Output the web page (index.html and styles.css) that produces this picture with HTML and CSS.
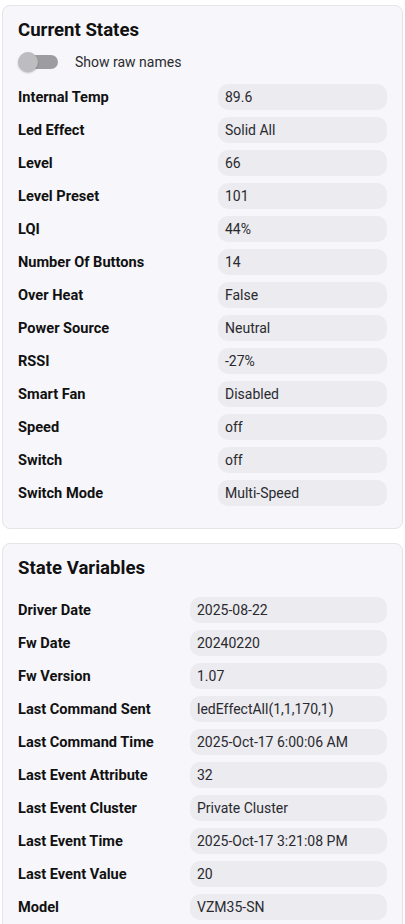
FILE: index.html
```html
<!DOCTYPE html>
<html lang="en">
<head>
    <meta charset="UTF-8">
    <meta name="viewport" content="width=device-width, initial-scale=1.0">
    <title>Device States</title>
    <link rel="stylesheet" href="styles.css">
</head>
<body>

<!-- Current states card -->
<div class="card">
    <h2>Current States</h2>
    <label class="toggle-row">
        <span class="switch"><span class="knob"></span></span>
        <span>Show raw names</span>
    </label>
    <div class="state-list current">
        <div class="name">Internal Temp</div><div class="value">89.6</div>
        <div class="name">Led Effect</div><div class="value">Solid All</div>
        <div class="name">Level</div><div class="value">66</div>
        <div class="name">Level Preset</div><div class="value">101</div>
        <div class="name">LQI</div><div class="value">44%</div>
        <div class="name">Number Of Buttons</div><div class="value">14</div>
        <div class="name">Over Heat</div><div class="value">False</div>
        <div class="name">Power Source</div><div class="value">Neutral</div>
        <div class="name">RSSI</div><div class="value">-27%</div>
        <div class="name">Smart Fan</div><div class="value">Disabled</div>
        <div class="name">Speed</div><div class="value">off</div>
        <div class="name">Switch</div><div class="value">off</div>
        <div class="name">Switch Mode</div><div class="value">Multi-Speed</div>
    </div>
</div>

<!-- State variables card -->
<div class="card">
    <h2 class="spaced">State Variables</h2>
    <div class="state-list variables">
        <div class="name">Driver Date</div><div class="value">2025-08-22</div>
        <div class="name">Fw Date</div><div class="value">20240220</div>
        <div class="name">Fw Version</div><div class="value">1.07</div>
        <div class="name">Last Command Sent</div><div class="value">ledEffectAll(1,1,170,1)</div>
        <div class="name">Last Command Time</div><div class="value">2025-Oct-17 6:00:06 AM</div>
        <div class="name">Last Event Attribute</div><div class="value">32</div>
        <div class="name">Last Event Cluster</div><div class="value">Private Cluster</div>
        <div class="name">Last Event Time</div><div class="value">2025-Oct-17 3:21:08 PM</div>
        <div class="name">Last Event Value</div><div class="value">20</div>
        <div class="name">Model</div><div class="value">VZM35-SN</div>
    </div>
</div>

</body>
</html>
```

FILE: styles.css
```css
/* Page */
body {
    font-family: Roboto, "Liberation Sans", Arial, sans-serif;
    margin: 0;
    padding: 5px 2px;
    background-color: #ffffff;
    color: #1b1b1f;
}

/* Cards */
.card {
    background-color: #f7f7fb;
    border: 1px solid #e4e4e9;
    border-radius: 8px;
    padding: 12px 15px 22px 15px;
    margin-bottom: 14px;
}

.card h2 {
    font-size: 18.6px;
    line-height: 24px;
    font-weight: 700;
    margin: 0;
    color: #111;
}

.card h2.spaced {
    margin-bottom: 17px;
}

/* Toggle */
.toggle-row {
    display: flex;
    align-items: center;
    height: 28px;
    margin-top: 6px;
    margin-bottom: 8px;
    font-size: 14px;
    color: #2a2a2e;
}

.switch {
    position: relative;
    width: 40px;
    height: 14px;
    margin-right: 17px;
    display: flex;
    align-items: center;
}

.switch::before {
    content: "";
    position: absolute;
    left: 5px;
    right: 0;
    height: 14px;
    border-radius: 7px;
    background-color: #9d9da1;
}

.knob {
    position: absolute;
    left: 0;
    top: -3px;
    width: 20px;
    height: 20px;
    border-radius: 50%;
    background-color: #bdbdc0;
    box-shadow: 0 1px 2px rgba(0, 0, 0, 0.25);
}

/* State rows */
.state-list {
    display: grid;
    row-gap: 7px;
    align-items: center;
}

.state-list.current {
    grid-template-columns: 200px 169px;
}

.state-list.variables {
    grid-template-columns: 172px 197px;
}

.state-list .name {
    font-size: 14.6px;
    font-weight: 700;
    color: #111;
    white-space: nowrap;
}

.state-list .value {
    background-color: #ebebf0;
    border-radius: 10px;
    height: 26px;
    line-height: 26px;
    padding: 0 7px;
    font-size: 14px;
    color: #2a2a2e;
    white-space: nowrap;
    overflow: hidden;
}
```
